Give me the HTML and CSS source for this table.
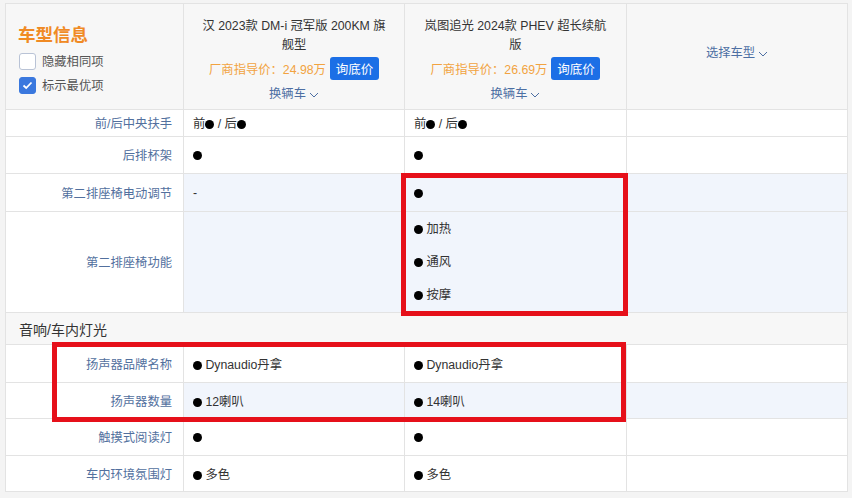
FILE: index.html
```html
<!DOCTYPE html>
<html lang="zh-CN">
<head>
    <meta charset="UTF-8">
    <meta name="viewport" content="width=device-width, initial-scale=1.0">
    <title>车型参数对比</title>
    <link rel="stylesheet" href="styles.css">
</head>
<body>
    <div class="page">
        <table class="compare">
            <colgroup>
                <col class="col-label">
                <col class="col-car">
                <col class="col-car2">
                <col class="col-car">
            </colgroup>
            <thead>
                <tr class="head">
                    <th class="info">
                        <div class="info-title">车型信息</div>
                        <label class="check"><span class="box"></span>隐藏相同项</label>
                        <label class="check"><span class="box on"><svg width="11" height="9" viewBox="0 0 11 9"><polyline points="1.5,4.5 4.2,7 9.5,1.5" fill="none" stroke="#fff" stroke-width="1.8"/></svg></span>标示最优项</label>
                    </th>
                    <th class="car">
                        <div class="car-name">汉 2023款 DM-i 冠军版 200KM 旗舰型</div>
                        <div class="price-row">
                            <span class="price">厂商指导价：24.98万</span>
                            <button class="ask">询底价</button>
                        </div>
                        <div class="switch">换辆车<svg width="10" height="6" viewBox="0 0 10 6"><polyline points="1,1 5,5 9,1" fill="none" stroke="currentColor" stroke-width="1"/></svg></div>
                    </th>
                    <th class="car">
                        <div class="car-name">岚图追光 2024款 PHEV 超长续航版</div>
                        <div class="price-row">
                            <span class="price">厂商指导价：26.69万</span>
                            <button class="ask">询底价</button>
                        </div>
                        <div class="switch">换辆车<svg width="10" height="6" viewBox="0 0 10 6"><polyline points="1,1 5,5 9,1" fill="none" stroke="currentColor" stroke-width="1"/></svg></div>
                    </th>
                    <th class="pick">
                        <div class="switch">选择车型<svg width="10" height="6" viewBox="0 0 10 6"><polyline points="1,1 5,5 9,1" fill="none" stroke="currentColor" stroke-width="1"/></svg></div>
                    </th>
                </tr>
            </thead>
            <tbody>
                <tr class="h27">
                    <td class="label">前/后中央扶手</td>
                    <td>前<i class="dot"></i> / 后<i class="dot"></i></td>
                    <td>前<i class="dot"></i> / 后<i class="dot"></i></td>
                    <td></td>
                </tr>
                <tr class="h37">
                    <td class="label">后排杯架</td>
                    <td><i class="dot"></i></td>
                    <td><i class="dot"></i></td>
                    <td></td>
                </tr>
                <tr class="h38 tint">
                    <td class="label">第二排座椅电动调节</td>
                    <td>-</td>
                    <td><i class="dot"></i></td>
                    <td></td>
                </tr>
                <tr class="h100 tint">
                    <td class="label">第二排座椅功能</td>
                    <td></td>
                    <td>
                        <div class="list">
                            <div><i class="dot"></i> 加热</div>
                            <div><i class="dot"></i> 通风</div>
                            <div><i class="dot"></i> 按摩</div>
                        </div>
                    </td>
                    <td></td>
                </tr>
                <tr class="section">
                    <td colspan="4">音响/车内灯光</td>
                </tr>
                <tr class="h38">
                    <td class="label">扬声器品牌名称</td>
                    <td><i class="dot"></i> Dynaudio丹拿</td>
                    <td><i class="dot"></i> Dynaudio丹拿</td>
                    <td></td>
                </tr>
                <tr class="h36 tint">
                    <td class="label">扬声器数量</td>
                    <td><i class="dot"></i> 12喇叭</td>
                    <td><i class="dot"></i> 14喇叭</td>
                    <td></td>
                </tr>
                <tr class="h37">
                    <td class="label">触摸式阅读灯</td>
                    <td><i class="dot"></i></td>
                    <td><i class="dot"></i></td>
                    <td></td>
                </tr>
                <tr class="h36">
                    <td class="label">车内环境氛围灯</td>
                    <td><i class="dot"></i> 多色</td>
                    <td><i class="dot"></i> 多色</td>
                    <td></td>
                </tr>
            </tbody>
        </table>
        <div class="mark mark-seat"></div>
        <div class="mark mark-audio"></div>
    </div>
</body>
</html>
```

FILE: styles.css
```css
body {
    margin: 0;
    background-color: #f4f4f4;
    font-family: 'Liberation Sans', 'Noto Sans CJK SC', sans-serif;
    font-size: 12.3px;
    color: #333;
}
.page {
    position: relative;
    width: 852px;
    height: 498px;
    padding: 3px 0 0 5px;
    box-sizing: border-box;
    overflow: hidden;
}
.compare {
    width: 842px;
    table-layout: fixed;
    border-collapse: collapse;
    background-color: #fff;
}
.col-label { width: 178px; }
.col-car { width: 221px; }
.col-car2 { width: 222px; }
.compare th,
.compare td {
    border: 1px solid #e3e3e3;
    padding: 0;
    font-weight: normal;
}
.compare td {
    padding-left: 9px;
    vertical-align: middle;
}
.head {
    height: 106px;
}
.head th {
    background-color: #f7f7f7;
    vertical-align: top;
}
.info {
    text-align: left;
    padding: 19px 0 0 12px !important;
}
.info-title {
    font-size: 17.5px;
    font-weight: bold;
    color: #f08a24;
    line-height: 24px;
    margin-bottom: 2px;
}
.check {
    display: flex;
    align-items: center;
    height: 24px;
    color: #555;
}
.box {
    width: 15px;
    height: 15px;
    border: 1px solid #b9c3d6;
    border-radius: 3px;
    background-color: #fff;
    margin: 0 6px 0 1px;
    display: flex;
    align-items: center;
    justify-content: center;
}
.box.on {
    background-color: #3a78de;
    border-color: #3a78de;
}
.car {
    text-align: center;
    padding-top: 13px !important;
}
.car-name {
    width: 190px;
    margin: 0 auto;
    line-height: 19px;
    color: #333;
}
.price-row {
    display: flex;
    align-items: center;
    justify-content: center;
    gap: 4px;
    margin-top: 2px;
    height: 23px;
}
.price {
    color: #f2a340;
}
.ask {
    font-family: inherit;
    font-size: 12.5px;
    color: #fff;
    background-color: #1c6fe6;
    border: none;
    border-radius: 3px;
    height: 23px;
    width: 49px;
    padding: 0;
}
.switch {
    color: #4d6fa3;
    line-height: 19px;
    margin-top: 5px;
    display: flex;
    align-items: center;
    justify-content: center;
    gap: 3px;
}
.head th.pick {
    vertical-align: middle;
    padding-bottom: 6px;
}
.pick .switch {
    margin-top: 0;
}
.compare td.label {
    text-align: right;
    padding: 0 11px 0 0;
    color: #52709e;
}
.h27 { height: 27px; }
.h36 { height: 36px; }
.h37 { height: 37px; }
.h38 { height: 38px; }
.h100 { height: 100px; }
.tint td {
    background-color: #f1f5fc;
}
.tint td.label {
    background-color: #fff;
}
.list {
    padding-top: 1px;
}
.list div {
    height: 33px;
    line-height: 33px;
}
.section {
    height: 32px;
}
.section td {
    background-color: #f7f7f7;
    font-size: 14px;
    padding-left: 13px;
}
.dot {
    display: inline-block;
    width: 9px;
    height: 9px;
    border-radius: 50%;
    background-color: #000;
    vertical-align: -1px;
}
.mark {
    position: absolute;
    border: 5px solid #e6101a;
    box-sizing: border-box;
}
.mark-seat {
    left: 401px;
    top: 173px;
    width: 227px;
    height: 143px;
}
.mark-audio {
    left: 52px;
    top: 342px;
    width: 574px;
    height: 80px;
}
```
